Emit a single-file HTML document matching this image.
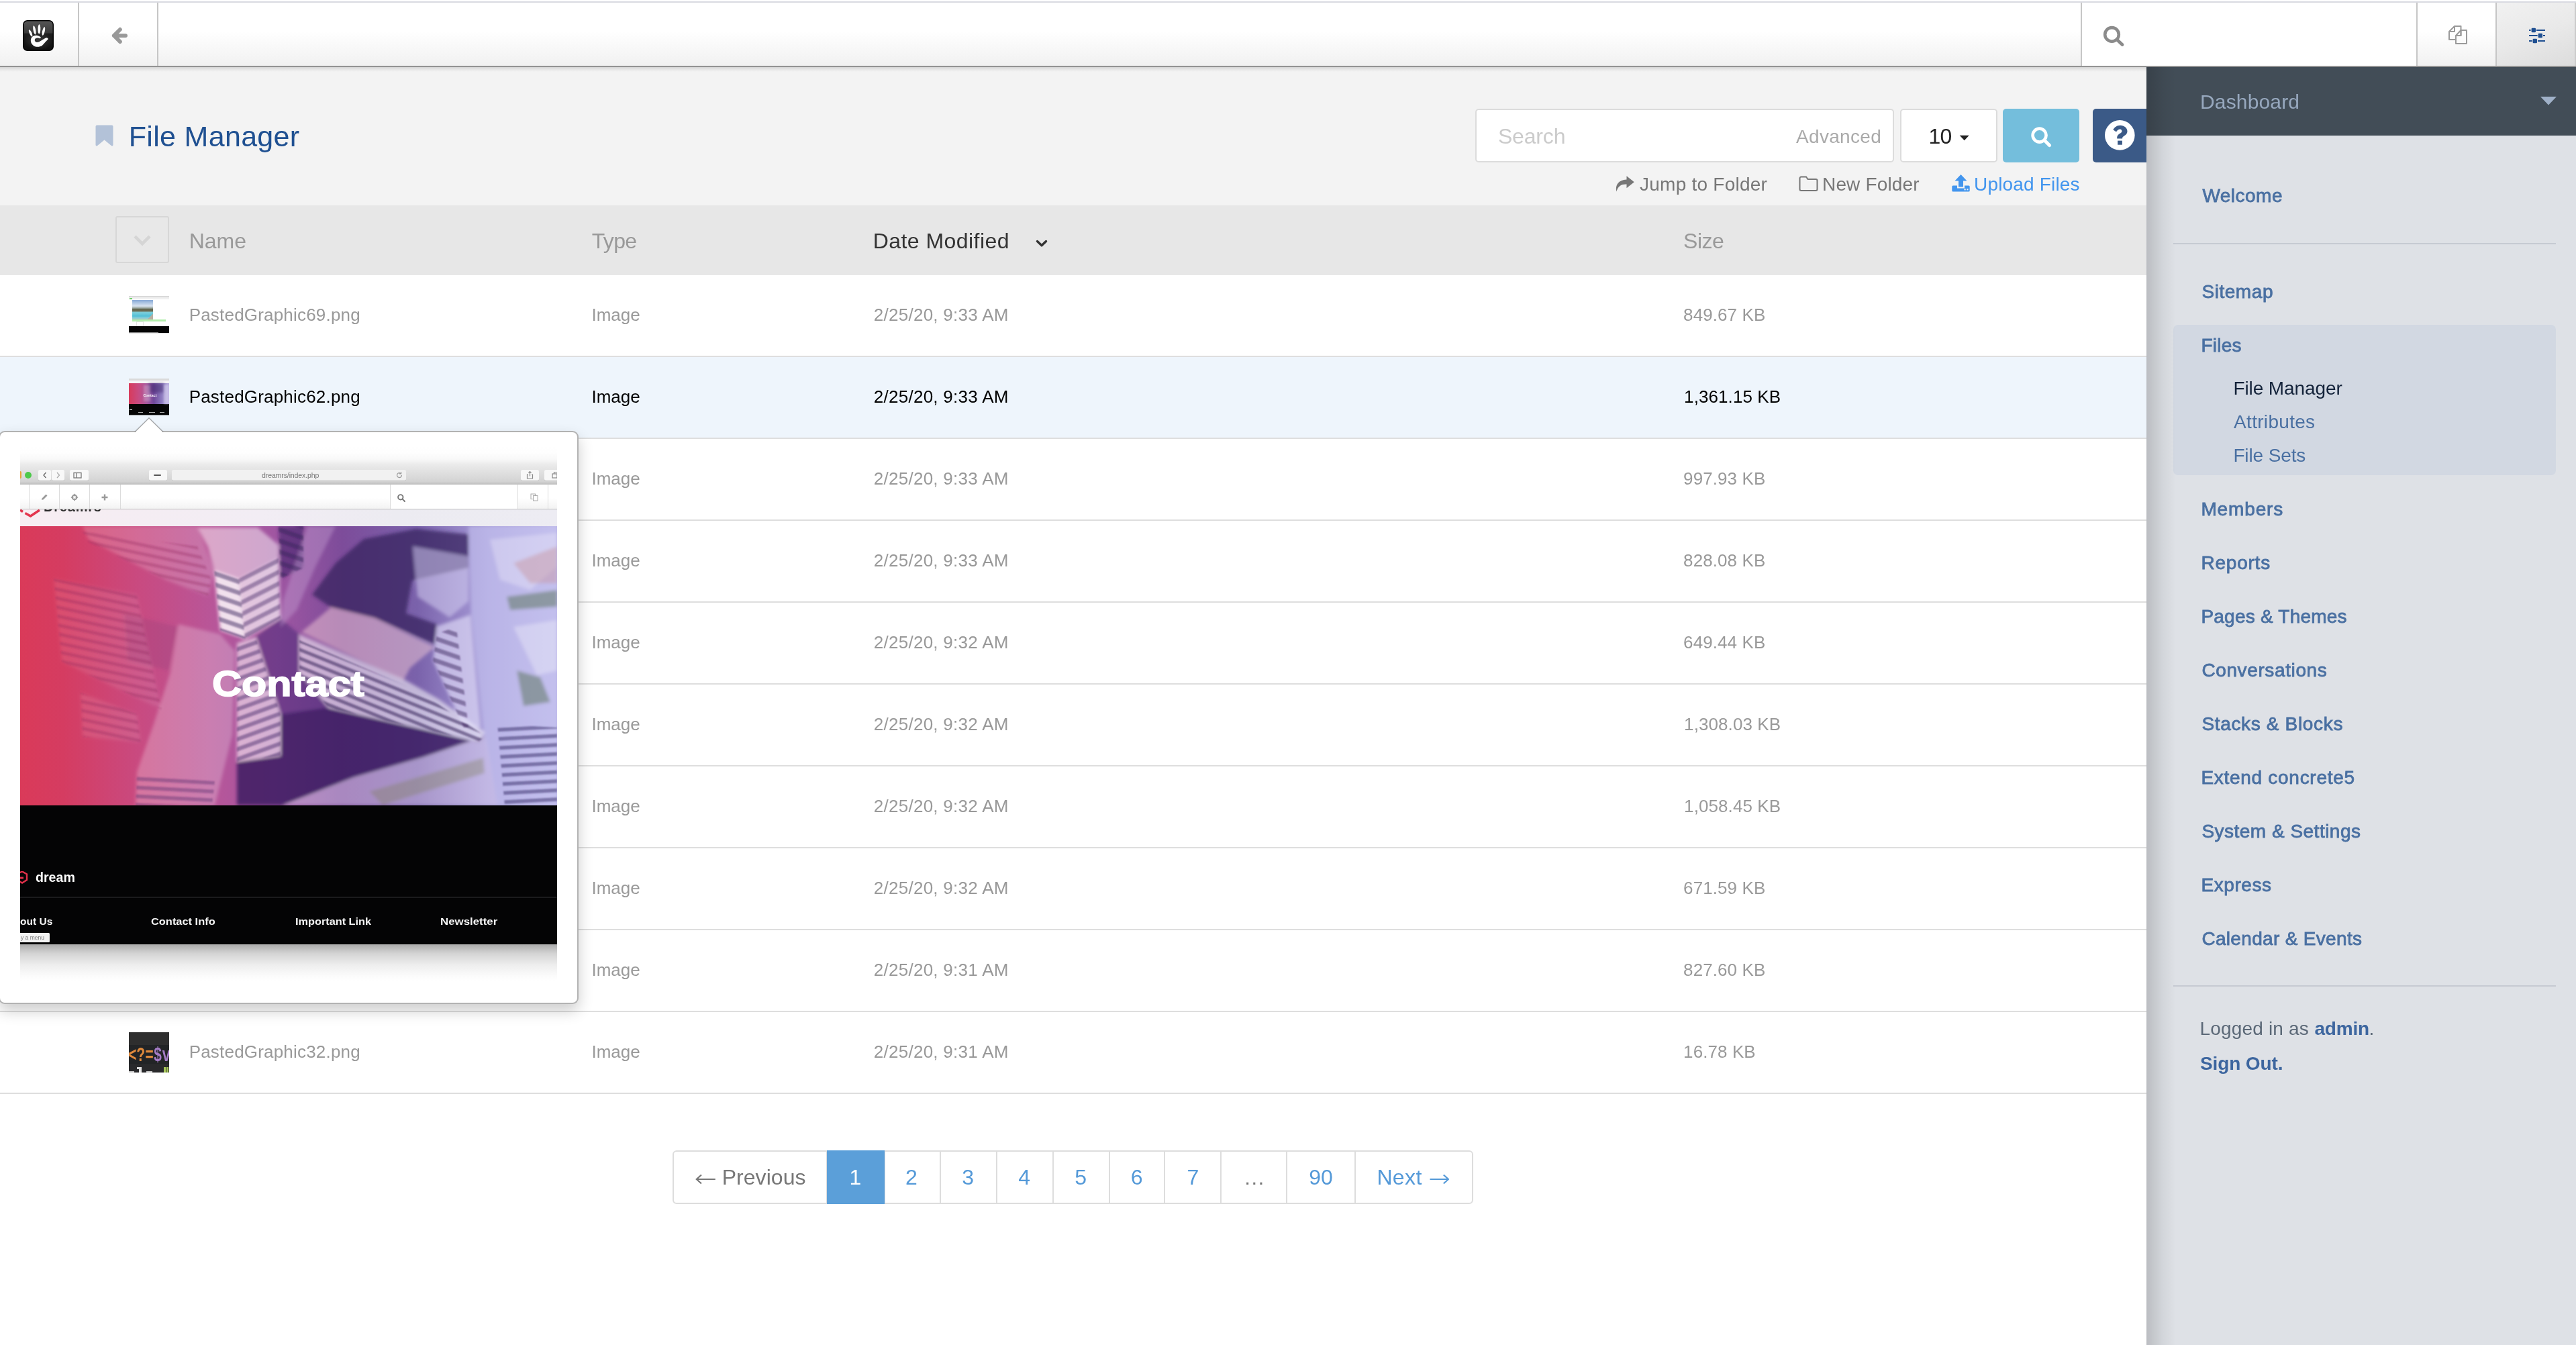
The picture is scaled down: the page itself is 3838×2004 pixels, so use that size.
<!DOCTYPE html>
<html>
<head>
<meta charset="utf-8">
<title>File Manager</title>
<style>
*{box-sizing:border-box;margin:0;padding:0}
html,body{width:3838px;height:2004px;overflow:hidden;background:#fff}
body{position:relative;font-family:"Liberation Sans",sans-serif;color:#999}
#w{position:absolute;left:0;top:0;width:3838px;height:2004px;overflow:hidden;will-change:transform}
.abs{position:absolute}
.t{position:absolute;white-space:nowrap;line-height:1}
/* top chrome */
#topstrip{left:0;top:0;width:3838px;height:4px;background:linear-gradient(#fff 0,#fff 2px,#d9dae1 2px,#d9dae1 4px)}
#toolbar{left:0;top:4px;width:3838px;height:94px;background:linear-gradient(#fff 0,#fff 45%,#f1f1f1 100%)}
#tbborder{left:0;top:98px;width:3838px;height:2px;background:#939393}
#tbshadow{left:0;top:100px;width:3198px;height:7px;background:linear-gradient(rgba(0,0,0,.12),rgba(0,0,0,.05) 50%,rgba(0,0,0,0))}
.vdiv{position:absolute;top:4px;width:2px;height:94px;background:#c6c6c6}
/* page */
#pagebg{left:0;top:100px;width:3198px;height:206px;background:#f3f3f3}
#thead{left:0;top:306px;width:3198px;height:104px;background:#e7e7e7}
.row{position:absolute;left:0;width:3198px;height:122px;border-bottom:2px solid #dedede;background:#fff}
.row.hl{background:#eef5fc}
.c{position:absolute;white-space:nowrap;line-height:1;font-size:26px;color:#999;top:46px}
.hl .c{color:#000}
.thumb{position:absolute;left:192px;top:31px;width:60px;height:56px;overflow:hidden}
/* sidebar */
#side{left:3198px;top:100px;width:640px;height:1904px;background:#dee1e6;overflow:hidden}
#sidehead{left:0;top:0;width:640px;height:102px;background:#424d57}
#sideshadow{left:0;top:0;width:44px;height:1904px;background:linear-gradient(90deg,rgba(0,0,0,.16),rgba(0,0,0,.05) 55%,rgba(0,0,0,0))}
.nav{position:absolute;left:82px;white-space:nowrap;line-height:1;font-size:28px;font-weight:bold;color:#4a70a2}
.sub{position:absolute;left:130px;white-space:nowrap;line-height:1;font-size:28px;color:#4a70a2}
.hr{position:absolute;left:40px;width:570px;height:2px;background:#c6cad2}
/* pagination */
.pg{position:absolute;top:1714px;height:80px;border:2px solid #ddd;background:#fff;font-size:32px;line-height:76px;text-align:center;color:#5499d8;white-space:nowrap}
@media (min-resolution:1.5dppx) and (max-width:2000px){html{zoom:.5}}
</style>
</head>
<body>
<div id="w">
<div id="topstrip" class="abs"></div>
<div id="toolbar" class="abs"></div>
<div id="pagebg" class="abs"></div>
<div id="thead" class="abs"></div>
<div class="row" style="top:410px"><div class="abs" style="left:192px;top:31px;width:60px;height:56px;background:#fff;overflow:hidden"><div class="abs" style="left:0px;top:0px;width:60px;height:2px;background:#d9d9d9"></div><div class="abs" style="left:0px;top:2px;width:60px;height:3px;background:#f0f0f0"></div><div class="abs" style="left:1px;top:2.5px;width:4px;height:2px;background:#6fcf6a"></div><div class="abs" style="left:5px;top:6px;width:31px;height:30px;background:linear-gradient(#86a8d6 0,#b9cde6 18%,#d9e3f0 30%,#9aa7a0 40%,#5d5f45 47%,#6d6a50 54%,#7ccfdc 62%,#52bfd6 80%,#8fd0d8 90%,#b9b2a3 100%)"></div><div class="abs" style="left:27px;top:27px;width:9px;height:9px;background:linear-gradient(135deg,rgba(0,0,0,0) 45%,#b8afa2 46%)"></div><div class="abs" style="left:5px;top:35px;width:50px;height:3px;background:#b4efae"></div><div class="abs" style="left:11px;top:38px;width:11px;height:7px;background:#fff;border:1px solid #e4e4e4"></div><div class="abs" style="left:0px;top:45px;width:60px;height:10px;background:#050505"></div><div class="abs" style="left:0px;top:54px;width:44px;height:1px;background:#8a8a8a"></div><div class="abs" style="left:0px;top:55px;width:60px;height:1px;background:#ddd"></div></div><div class="t" style="left:281.70px;top:46px;font-size:26px;color:#999;letter-spacing:0.192px;">PastedGraphic69.png</div>
<div class="t" style="left:881.40px;top:46px;font-size:26px;color:#999;letter-spacing:0.025px;">Image</div>
<div class="t" style="left:1301.70px;top:46px;font-size:26px;color:#999;letter-spacing:0.276px;">2/25/20, 9:33 AM</div>
<div class="t" style="left:2508.10px;top:46px;font-size:26px;color:#999;letter-spacing:0.089px;">849.67 KB</div>
</div>
<div class="row hl" style="top:532px"><div class="abs" style="left:192px;top:32px;width:60px;height:55px;background:#050505;overflow:hidden"><div class="abs" style="left:0px;top:0px;width:60px;height:3px;background:#dadada"></div><div class="abs" style="left:0px;top:3px;width:60px;height:4px;background:#f6f4f6"></div><div class="abs" style="left:0px;top:7px;width:60px;height:31px;background:linear-gradient(90deg,#d83a5b 0,#c74c83 25%,#a6589f 45%,#70489a 62%,#8b78bd 80%,#b5a9df 100%)"></div><div class="abs" style="left:30px;top:7px;width:22px;height:14px;background:rgba(60,35,105,.45);filter:blur(2px)"></div><div class="abs" style="left:52px;top:9px;width:8px;height:29px;background:rgba(235,230,250,.45);filter:blur(1.500px)"></div><div class="abs" style="left:22px;top:10px;width:10px;height:24px;background:rgba(255,255,255,.22);filter:blur(1.500px)"></div><div class="t" style="left:21.500px;top:22.500px;font-size:5.200px;font-weight:bold;color:#fff;letter-spacing:.1px">Contact</div><div class="abs" style="left:1px;top:46px;width:4px;height:1px;background:#ddd"></div><div class="abs" style="left:14px;top:50px;width:7px;height:1px;background:#aaa"></div><div class="abs" style="left:30px;top:50px;width:9px;height:1px;background:#aaa"></div><div class="abs" style="left:46px;top:50px;width:7px;height:1px;background:#aaa"></div><div class="abs" style="left:0px;top:54px;width:60px;height:1px;background:#999"></div></div><div class="t" style="left:281.70px;top:46px;font-size:26px;color:#000;letter-spacing:0.192px;">PastedGraphic62.png</div>
<div class="t" style="left:881.40px;top:46px;font-size:26px;color:#000;letter-spacing:0.025px;">Image</div>
<div class="t" style="left:1301.70px;top:46px;font-size:26px;color:#000;letter-spacing:0.276px;">2/25/20, 9:33 AM</div>
<div class="t" style="left:2509.10px;top:46px;font-size:26px;color:#000;letter-spacing:0.089px;">1,361.15 KB</div>
</div>
<div class="row" style="top:654px"><div class="t" style="left:281.70px;top:46px;font-size:26px;color:#999;letter-spacing:0.192px;">PastedGraphic61.png</div>
<div class="t" style="left:881.40px;top:46px;font-size:26px;color:#999;letter-spacing:0.025px;">Image</div>
<div class="t" style="left:1301.70px;top:46px;font-size:26px;color:#999;letter-spacing:0.276px;">2/25/20, 9:33 AM</div>
<div class="t" style="left:2508.10px;top:46px;font-size:26px;color:#999;letter-spacing:0.089px;">997.93 KB</div>
</div>
<div class="row" style="top:776px"><div class="t" style="left:281.70px;top:46px;font-size:26px;color:#999;letter-spacing:0.192px;">PastedGraphic60.png</div>
<div class="t" style="left:881.40px;top:46px;font-size:26px;color:#999;letter-spacing:0.025px;">Image</div>
<div class="t" style="left:1301.70px;top:46px;font-size:26px;color:#999;letter-spacing:0.276px;">2/25/20, 9:33 AM</div>
<div class="t" style="left:2508.10px;top:46px;font-size:26px;color:#999;letter-spacing:0.089px;">828.08 KB</div>
</div>
<div class="row" style="top:898px"><div class="t" style="left:281.70px;top:46px;font-size:26px;color:#999;letter-spacing:0.192px;">PastedGraphic59.png</div>
<div class="t" style="left:881.40px;top:46px;font-size:26px;color:#999;letter-spacing:0.025px;">Image</div>
<div class="t" style="left:1301.70px;top:46px;font-size:26px;color:#999;letter-spacing:0.276px;">2/25/20, 9:32 AM</div>
<div class="t" style="left:2508.10px;top:46px;font-size:26px;color:#999;letter-spacing:0.089px;">649.44 KB</div>
</div>
<div class="row" style="top:1020px"><div class="t" style="left:281.70px;top:46px;font-size:26px;color:#999;letter-spacing:0.192px;">PastedGraphic58.png</div>
<div class="t" style="left:881.40px;top:46px;font-size:26px;color:#999;letter-spacing:0.025px;">Image</div>
<div class="t" style="left:1301.70px;top:46px;font-size:26px;color:#999;letter-spacing:0.276px;">2/25/20, 9:32 AM</div>
<div class="t" style="left:2509.10px;top:46px;font-size:26px;color:#999;letter-spacing:0.089px;">1,308.03 KB</div>
</div>
<div class="row" style="top:1142px"><div class="t" style="left:281.70px;top:46px;font-size:26px;color:#999;letter-spacing:0.192px;">PastedGraphic57.png</div>
<div class="t" style="left:881.40px;top:46px;font-size:26px;color:#999;letter-spacing:0.025px;">Image</div>
<div class="t" style="left:1301.70px;top:46px;font-size:26px;color:#999;letter-spacing:0.276px;">2/25/20, 9:32 AM</div>
<div class="t" style="left:2509.10px;top:46px;font-size:26px;color:#999;letter-spacing:0.089px;">1,058.45 KB</div>
</div>
<div class="row" style="top:1264px"><div class="t" style="left:281.70px;top:46px;font-size:26px;color:#999;letter-spacing:0.192px;">PastedGraphic56.png</div>
<div class="t" style="left:881.40px;top:46px;font-size:26px;color:#999;letter-spacing:0.025px;">Image</div>
<div class="t" style="left:1301.70px;top:46px;font-size:26px;color:#999;letter-spacing:0.276px;">2/25/20, 9:32 AM</div>
<div class="t" style="left:2508.10px;top:46px;font-size:26px;color:#999;letter-spacing:0.089px;">671.59 KB</div>
</div>
<div class="row" style="top:1386px"><div class="t" style="left:281.70px;top:46px;font-size:26px;color:#999;letter-spacing:0.192px;">PastedGraphic55.png</div>
<div class="t" style="left:881.40px;top:46px;font-size:26px;color:#999;letter-spacing:0.025px;">Image</div>
<div class="t" style="left:1301.70px;top:46px;font-size:26px;color:#999;letter-spacing:0.276px;">2/25/20, 9:31 AM</div>
<div class="t" style="left:2508.10px;top:46px;font-size:26px;color:#999;letter-spacing:0.089px;">827.60 KB</div>
</div>
<div class="row" style="top:1508px"><div class="abs" style="left:192px;top:30px;width:60px;height:60px;background:#2e2e2e;overflow:hidden"><div class="abs" style="left:0px;top:19px;width:60px;height:28px;background:#222426"></div><div class="abs" style="left:0px;top:47px;width:60px;height:13px;background:#29292b"></div><div class="t" style="left:-1px;top:20px;font-family:'Liberation Mono',monospace;font-weight:bold;font-size:30px;transform-origin:0 0;transform:scaleX(.7);color:#e08a3c">&lt;?=<span style="color:#a57cc6">$v</span></div><div class="abs" style="left:0px;top:58px;width:8px;height:2px;background:#c8c8c8"></div><div class="abs" style="left:11.5px;top:52px;width:4px;height:2.5px;background:#ddd"></div><div class="abs" style="left:14.5px;top:52px;width:4.5px;height:8px;background:#e4e4e4"></div><div class="abs" style="left:25.5px;top:58px;width:9px;height:2px;background:#c8c8c8"></div><div class="abs" style="left:52px;top:52px;width:2.5px;height:8px;background:#a9c95a"></div><div class="abs" style="left:56px;top:52px;width:2.5px;height:8px;background:#a9c95a"></div></div><div class="t" style="left:281.70px;top:46px;font-size:26px;color:#999;letter-spacing:0.192px;">PastedGraphic32.png</div>
<div class="t" style="left:881.40px;top:46px;font-size:26px;color:#999;letter-spacing:0.025px;">Image</div>
<div class="t" style="left:1301.70px;top:46px;font-size:26px;color:#999;letter-spacing:0.276px;">2/25/20, 9:31 AM</div>
<div class="t" style="left:2508.10px;top:46px;font-size:26px;color:#999;letter-spacing:0.089px;">16.78 KB</div>
</div>

<svg class="abs" style="left:142px;top:186px" width="28" height="33" viewBox="0 0 28 33"><path d="M2.500 0.500h22a2 2 0 0 1 2 2v27.500a1.600 1.600 0 0 1-2.700 1.100L13.500 22.500L3.200 31.100A1.600 1.600 0 0 1 .5 30V2.500a2 2 0 0 1 2-2z" fill="#b3c2d8"/></svg>
<div class="t" style="left:191.80px;top:182px;font-size:43px;color:#1f5091;letter-spacing:0.307px;">File Manager</div>
<div class="abs" style="left:2198px;top:162px;width:624px;height:80px;border:2px solid #dcdcdc;border-radius:5px;background:#fff"></div>
<div class="t" style="left:2231.90px;top:187px;font-size:32px;color:#cbcbcb;letter-spacing:-0.159px;">Search</div>
<div class="t" style="left:2676.00px;top:190px;font-size:28px;color:#aaa;letter-spacing:0.319px;">Advanced</div>
<div class="abs" style="left:2831px;top:162px;width:145px;height:80px;border:2px solid #dcdcdc;border-radius:5px;background:#fff"></div>
<div class="t" style="left:2873.40px;top:187px;font-size:32px;color:#222;letter-spacing:-0.797px;">10</div>
<svg class="abs" style="left:2919px;top:201px" width="16" height="9" viewBox="0 0 16 9"><path d="M.7 .8h14L7.700 8.300z" fill="#222"/></svg>
<div class="abs" style="left:2984px;top:162px;width:114px;height:80px;border-radius:5px;background:#74bedc"></div>
<svg class="abs" style="left:3022px;top:185px" width="40" height="40" viewBox="0 0 40 40"><circle cx="16.600" cy="16.600" r="10" fill="none" stroke="#fff" stroke-width="4.600"/><path d="M24 24L31.500 31.500" stroke="#fff" stroke-width="5" stroke-linecap="round"/></svg>
<div class="abs" style="left:3118px;top:162px;width:90px;height:80px;border-radius:5px;background:#3b5a87"></div>
<svg class="abs" style="left:3135.800px;top:179px" width="46" height="46" viewBox="0 0 46 46"><circle cx="22.300" cy="22.400" r="22.300" fill="#fff"/><path d="M12.300 14.300C14.500 10.500 18 7.700 23 7.700C28.500 7.700 33.500 11.500 33.500 16.600C33.500 20.500 31 22.300 28.500 23.800C26.800 24.800 26.100 25.600 26.100 27V27.500H18.200V26.500C18.200 22.800 20.500 21.200 22.800 19.800C24.500 18.800 25.400 18 25.400 16.600C25.400 14.600 24 13.400 22.800 13.400C20.500 13.400 18.600 14.800 17 17.600z" fill="#3b5a87"/><rect x="19.100" y="30.600" width="6.800" height="6.100" fill="#3b5a87"/></svg>
<svg class="abs" style="left:2406px;top:261px" width="30" height="26" viewBox="0 0 30 26"><path d="M17.500 1.200L28.800 10.200L17.500 19.200V13.600C9.500 13.400 4.800 16.200 2.400 24.600C.2 14.500 5.500 7.200 17.500 6.600z" fill="#777"/></svg>
<div class="t" style="left:2443.10px;top:261px;font-size:28px;color:#777;letter-spacing:0.229px;">Jump to Folder</div>
<svg class="abs" style="left:2680px;top:262px" width="30" height="24" viewBox="0 0 30 24"><path d="M3.500 1.500h7.500l2.500 3.500h12a2 2 0 0 1 2 2v13a2 2 0 0 1-2 2h-22a2 2 0 0 1-2-2v-16.500a2 2 0 0 1 2-2z" fill="none" stroke="#777" stroke-width="2"/></svg>
<div class="t" style="left:2715.00px;top:261px;font-size:28px;color:#777;letter-spacing:0.163px;">New Folder</div>
<svg class="abs" style="left:2907px;top:259px" width="30" height="28" viewBox="0 0 30 28"><path d="M14.500 1L23.500 10.500H18V19.500H11V10.500H5.500z" fill="#4295ee"/><path d="M2.800 17.500h6.200v4h11v-4h6.200a1.500 1.500 0 0 1 1.500 1.500v6a1.500 1.500 0 0 1-1.500 1.500h-23.400a1.500 1.500 0 0 1-1.500-1.500v-6a1.500 1.500 0 0 1 1.500-1.500z" fill="#4295ee"/><rect x="19.500" y="22.200" width="2.200" height="2.200" fill="#f3f3f3"/><rect x="23.300" y="22.200" width="2.200" height="2.200" fill="#f3f3f3"/></svg>
<div class="t" style="left:2941.10px;top:261px;font-size:28px;color:#4295ee;letter-spacing:0.161px;">Upload Files</div>
<div class="abs" style="left:172px;top:322px;width:80px;height:70px;border:2px solid #d7d7d7;border-radius:3px;background:#e8e8e8"></div>
<svg class="abs" style="left:198px;top:348px" width="28" height="22" viewBox="0 0 28 22"><path d="M3 4.200L14 15.200L25 4.200" fill="none" stroke="#d5d5d5" stroke-width="4.600" stroke-linecap="butt" stroke-linejoin="miter"/></svg>
<div class="t" style="left:281.70px;top:343px;font-size:32px;color:#999;letter-spacing:0.013px;">Name</div>
<div class="t" style="left:881.70px;top:343px;font-size:32px;color:#999;letter-spacing:-0.659px;">Type</div>
<div class="t" style="left:1300.70px;top:343px;font-size:32px;color:#333;letter-spacing:0.447px;">Date Modified</div>
<svg class="abs" style="left:1542px;top:356px" width="20" height="14" viewBox="0 0 20 14"><path d="M3.500 3.500L10 9.800L16.500 3.500" fill="none" stroke="#333" stroke-width="3.400" stroke-linecap="round" stroke-linejoin="round"/></svg>
<div class="t" style="left:2508.10px;top:343px;font-size:32px;color:#999;letter-spacing:-0.518px;">Size</div>

<div class="pg" style="left:1002px;width:231px;border-radius:6px 0 0 6px;"></div>
<div class="pg" style="left:1232px;width:86px;background:#5b9fd9;border-color:#5b9fd9;z-index:2;"></div>
<div class="pg" style="left:1317px;width:85px;"></div>
<div class="pg" style="left:1400px;width:86px;"></div>
<div class="pg" style="left:1484px;width:86px;"></div>
<div class="pg" style="left:1568px;width:86px;"></div>
<div class="pg" style="left:1652px;width:84px;"></div>
<div class="pg" style="left:1734px;width:86px;"></div>
<div class="pg" style="left:1818px;width:100px;"></div>
<div class="pg" style="left:1916px;width:104px;"></div>
<div class="pg" style="left:2018px;width:177px;border-radius:0 6px 6px 0;"></div>
<div class="t" style="left:1224.4px;top:1738px;width:100px;text-align:center;font-size:32px;color:#fff;z-index:3">1</div>
<div class="t" style="left:1307.9px;top:1738px;width:100px;text-align:center;font-size:32px;color:#5499d8;z-index:3">2</div>
<div class="t" style="left:1392.2px;top:1738px;width:100px;text-align:center;font-size:32px;color:#5499d8;z-index:3">3</div>
<div class="t" style="left:1476.1px;top:1738px;width:100px;text-align:center;font-size:32px;color:#5499d8;z-index:3">4</div>
<div class="t" style="left:1560.1px;top:1738px;width:100px;text-align:center;font-size:32px;color:#5499d8;z-index:3">5</div>
<div class="t" style="left:1643.6px;top:1738px;width:100px;text-align:center;font-size:32px;color:#5499d8;z-index:3">6</div>
<div class="t" style="left:1727.4px;top:1738px;width:100px;text-align:center;font-size:32px;color:#5499d8;z-index:3">7</div>
<div class="t" style="left:1818.7px;top:1738px;width:100px;text-align:center;font-size:32px;color:#777;z-index:3">…</div>
<div class="t" style="left:1918.0px;top:1738px;width:100px;text-align:center;font-size:32px;color:#5499d8;z-index:3">90</div>
<div class="t" style="left:1075.70px;top:1738px;font-size:32px;color:#777;letter-spacing:0.043px;z-index:3;">Previous</div>
<div class="t" style="left:2051.40px;top:1738px;font-size:32px;color:#5499d8;letter-spacing:0.365px;z-index:3;">Next</div>
<svg class="abs" style="left:1036.3px;top:1749.0px;z-index:3" width="30.3" height="16" viewBox="0 0 30.3 16"><path d="M29.8 8H1.800M9 1.500L1.800 8L9 14.500" fill="none" stroke="#777" stroke-width="2.200" stroke-linejoin="miter"/></svg>
<svg class="abs" style="left:2129.5px;top:1749.0px;z-index:3" width="29.8" height="16" viewBox="0 0 29.8 16"><path d="M.5 8H28.0M20.8 1.500L28.0 8L20.8 14.500" fill="none" stroke="#5499d8" stroke-width="2.200" stroke-linejoin="miter"/></svg>

<svg class="abs" style="left:198px;top:620px;z-index:5" width="48" height="26" viewBox="0 0 48 26"><path d="M3 23.500L24 2.800L45 23.500" fill="#fff" stroke="rgba(0,0,0,.32)" stroke-width="1.600"/><rect x="4" y="23" width="40" height="3" fill="#fff"/></svg>
<div id="pop" class="abs" style="left:-2px;top:642px;width:864px;height:854px;border:2px solid rgba(0,0,0,.3);border-radius:9px;background:#fff;box-shadow:0 10px 22px rgba(0,0,0,.2);z-index:4">
<div class="abs" style="left:30px;top:19px;width:800px;height:800px;overflow:hidden">
<div class="abs" style="left:0px;top:0px;width:800px;height:29px;background:linear-gradient(#fff 0,#fefefe 40%,#f8f8f8 74%,#ebebeb 100%)"></div>
<div class="abs" style="left:0px;top:28.5px;width:800px;height:30.5px;background:linear-gradient(#ebebeb,#d3d3d3 85%,#bdbdbd)"></div>
<div class="abs" style="left:0px;top:39px;width:2px;height:11px;background:#e8a53a;border-radius:0 5px 5px 0"></div>
<div class="abs" style="left:7.3px;top:39.9px;width:10.2px;height:10.2px;background:#4ec94a;border-radius:50%"></div>
<div class="abs" style="left:27.2px;top:37px;width:19px;height:15.6px;background:#f8f8f8;border-radius:2.500px;box-shadow:0 1px 0 rgba(0,0,0,.12)"></div>
<div class="abs" style="left:47px;top:37px;width:18.6px;height:15.6px;background:#f8f8f8;border-radius:2.500px;box-shadow:0 1px 0 rgba(0,0,0,.12)"></div>
<div class="abs" style="left:73.7px;top:37px;width:28.2px;height:15.6px;background:#f8f8f8;border-radius:2.500px;box-shadow:0 1px 0 rgba(0,0,0,.12)"></div>
<div class="abs" style="left:191.5px;top:37px;width:27px;height:15.6px;background:#f8f8f8;border-radius:2.500px;box-shadow:0 1px 0 rgba(0,0,0,.12)"></div>
<div class="abs" style="left:225.7px;top:37px;width:349px;height:15.6px;background:#f1f1f1;border-radius:2.500px;box-shadow:0 1px 0 rgba(0,0,0,.12)"></div>
<div class="abs" style="left:746px;top:37px;width:27px;height:15.6px;background:#f8f8f8;border-radius:2.500px;box-shadow:0 1px 0 rgba(0,0,0,.12)"></div>
<div class="abs" style="left:781px;top:37px;width:27px;height:15.6px;background:#f8f8f8;border-radius:2.500px;box-shadow:0 1px 0 rgba(0,0,0,.12)"></div>
<svg class="abs" style="left:27.2px;top:37px" width="80" height="16" viewBox="0 0 80 16" fill="none" stroke="#666" stroke-width="1.300"><path d="M11.500 4L8 8l3.500 4"/><path d="M28 4l3.500 4L28 12" stroke="#aaa"/><rect x="53" y="4.500" width="11" height="7.500" stroke="#777"/><path d="M57 4.500v7.500" stroke="#777"/></svg>
<div class="abs" style="left:199px;top:43.8px;width:11px;height:2.4px;background:#555;border-radius:1px"></div>
<div class="t" style="left:360px;top:40px;font-size:10.500px;color:#777;letter-spacing:-.1px">dreamrs/index.php</div>
<svg class="abs" style="left:559px;top:39px" width="12" height="12" viewBox="0 0 12 12" fill="none" stroke="#999" stroke-width="1.200"><path d="M9.500 6a3.500 3.500 0 1 1-1.200-2.600M8.600 1.200v2.600H6"/></svg>
<svg class="abs" style="left:747px;top:37px" width="60" height="16" viewBox="0 0 60 16" fill="none" stroke="#888" stroke-width="1.200"><path d="M10 7h-1.500v6h8V7H15M12.500 9.500V2.500M10.500 4.500l2-2l2 2"/><rect x="46" y="6" width="7" height="6"/><path d="M48.500 6V3.500h7v6H53"/></svg>
<div class="abs" style="left:0px;top:59px;width:800px;height:36px;background:linear-gradient(#fff 55%,#f3f3f3)"></div>
<div class="abs" style="left:551px;top:59px;width:190px;height:36px;background:#fff"></div>
<div class="abs" style="left:12.7px;top:59px;width:1px;height:36px;background:#dcdcdc"></div>
<div class="abs" style="left:58px;top:59px;width:1px;height:36px;background:#dcdcdc"></div>
<div class="abs" style="left:102.9px;top:59px;width:1px;height:36px;background:#dcdcdc"></div>
<div class="abs" style="left:148.8px;top:59px;width:1px;height:36px;background:#dcdcdc"></div>
<div class="abs" style="left:550.5px;top:59px;width:1px;height:36px;background:#dcdcdc"></div>
<div class="abs" style="left:741px;top:59px;width:1px;height:36px;background:#dcdcdc"></div>
<div class="abs" style="left:786px;top:59px;width:1px;height:36px;background:#dcdcdc"></div>
<svg class="abs" style="left:30px;top:72px" width="12" height="12" viewBox="0 0 12 12"><path d="M2 10l.8-2.800L8.500 1.500l2 2L4.800 9.200z" fill="#9a9a9a"/></svg>
<svg class="abs" style="left:75px;top:72px" width="12" height="12" viewBox="0 0 12 12"><circle cx="6" cy="6" r="3.300" fill="none" stroke="#9a9a9a" stroke-width="2.200"/><path d="M6 .8v10.400M.8 6h10.400" stroke="#9a9a9a" stroke-width="1.400"/><circle cx="6" cy="6" r="1.700" fill="#fff"/></svg>
<svg class="abs" style="left:120.3px;top:72px" width="12" height="12" viewBox="0 0 12 12"><path d="M6 1.500v9M1.500 6h9" stroke="#9a9a9a" stroke-width="2.400"/></svg>
<svg class="abs" style="left:561px;top:71.5px" width="14" height="14" viewBox="0 0 14 14"><circle cx="5.800" cy="5.800" r="3.700" fill="none" stroke="#777" stroke-width="1.900"/><path d="M8.600 8.600l3.400 3.400" stroke="#777" stroke-width="2" stroke-linecap="round"/></svg>
<svg class="abs" style="left:759px;top:71px" width="14" height="14" viewBox="0 0 14 14" fill="none" stroke="#aaa" stroke-width="1"><rect x="2" y="2" width="6.500" height="7.500"/><rect x="5.500" y="4.500" width="6.500" height="7.500" fill="#fff"/></svg>
<div class="abs" style="left:0px;top:94.5px;width:800px;height:1.5px;background:#bcbcbc"></div>
<div class="abs" style="left:0px;top:96px;width:800px;height:25px;background:linear-gradient(90deg,#f7edf2 0,#f2edf4 45%,#ecebf1 70%,#edecf3 100%)"></div>
<div class="abs" style="left:35px;top:95.6px;width:100px;height:5px;overflow:hidden"><div class="t" style="left:0;top:-13.500px;font-size:20px;font-weight:bold;color:#2a2a2a;letter-spacing:.8px">Dreamrs</div></div>
<svg class="abs" style="left:0px;top:95.6px" width="32" height="12" viewBox="0 0 32 12"><path d="M0 1l4 2.500M7.500 5.500l8 4.500L29 1" fill="none" stroke="#e3354e" stroke-width="3.600"/></svg>
<svg class="abs" style="left:0;top:121px" width="800" height="416" viewBox="0 0 800 416">
<defs>
<linearGradient id="hg" x1="0" y1="0" x2="1" y2="0">
<stop offset="0" stop-color="#da3a59"/><stop offset=".08" stop-color="#d53c61"/><stop offset=".22" stop-color="#c94a80"/><stop offset=".36" stop-color="#b85699"/><stop offset=".48" stop-color="#9f56a2"/><stop offset=".60" stop-color="#7d4c9a"/><stop offset=".74" stop-color="#7a62ab"/><stop offset=".87" stop-color="#a79cd8"/><stop offset="1" stop-color="#bdb7e8"/>
</linearGradient>
<filter id="b3" x="-10%" y="-10%" width="120%" height="120%"><feGaussianBlur stdDeviation="2.800"/></filter>
<filter id="b1" x="-10%" y="-10%" width="120%" height="120%"><feGaussianBlur stdDeviation="1.300"/></filter>
<pattern id="sa" width="20" height="15.500" patternUnits="userSpaceOnUse" patternTransform="rotate(19)"><rect width="20" height="6.500" fill="#3a1d5c" fill-opacity=".48"/></pattern>
<pattern id="sb" width="20" height="15.500" patternUnits="userSpaceOnUse" patternTransform="rotate(-27)"><rect width="20" height="6.500" fill="#3a1d5c" fill-opacity=".40"/></pattern>
<pattern id="sc" width="20" height="12" patternUnits="userSpaceOnUse" patternTransform="rotate(22)"><rect width="20" height="5" fill="#2c1850" fill-opacity=".5"/></pattern>
<pattern id="sd" width="20" height="13" patternUnits="userSpaceOnUse" patternTransform="rotate(12)"><rect width="20" height="5" fill="#8a2858" fill-opacity=".28"/></pattern>
<pattern id="se" width="20" height="13.500" patternUnits="userSpaceOnUse" patternTransform="rotate(-3)"><rect width="20" height="5.500" fill="#3d3470" fill-opacity=".55"/></pattern>
<pattern id="sf" width="20" height="14" patternUnits="userSpaceOnUse" patternTransform="rotate(-20)"><rect width="20" height="6" fill="#3a1d5c" fill-opacity=".42"/></pattern>
<pattern id="sg" width="20" height="13" patternUnits="userSpaceOnUse" patternTransform="rotate(3)"><rect width="20" height="5.500" fill="#5a2a70" fill-opacity=".42"/></pattern>
<clipPath id="hc"><rect width="800" height="416"/></clipPath>
</defs>
<g clip-path="url(#hc)">
<rect width="800" height="416" fill="url(#hg)"/>
<g filter="url(#b3)">
<!-- dark zones -->
<path d="M435 102L470 55L512 19L590 4L668 12L668 62L584 81L575 130L621 146L618 176L528 137L463 121z" fill="#34205f" fill-opacity=".74"/>
<path d="M385 0L422 0L422 62L388 78z" fill="#3d2266" fill-opacity=".55"/>
<path d="M460 270L683 322L693 313L600 345L497 375L391 416L323 416L323 351L388 342L388 280z" fill="#38195f" fill-opacity=".80"/>
<path d="M351 165L388 137L416 161L416 217L460 270L388 282z" fill="#4d2a78" fill-opacity=".55"/>
<path d="M155 130L235 150L222 215L160 200z" fill="#8a3a78" fill-opacity=".25"/>
<!-- road (lighter) -->
<path d="M428 0L470 0L440 60L412 125L388 150L392 110z" fill="#c7a6d8" fill-opacity=".38"/>
<!-- left long building L1 -->
<path d="M93 0L264 0L289 65L280 104L217 80L102 20z" fill="#fff" fill-opacity="0.18"/>
<!-- left stepped L2 -->
<path d="M50 78L174 102L190 180L211 273L140 240L62 202z" fill="#fff" fill-opacity="0.09"/>
<!-- bottom-left L3 -->
<path d="M90 248L174 280L180 322L93 314z" fill="#fff" fill-opacity="0.10"/>
<!-- centre vertical building C1 -->
<path d="M236 146L298 161L320 186L316 311L290 416L172 416L174 366L199 295L224 217z" fill="#fff" fill-opacity="0.24"/>
<path d="M323 174L351 165L388 280L388 342L323 351z" fill="#fff" fill-opacity="0.54"/>
<!-- tower T1 roof & faces -->
<path d="M264 2L354 2L385 28L385 47L326 78L289 65L280 31z" fill="#fff" fill-opacity="0.48"/>
<path d="M289 65L326 78L335 168L298 155z" fill="#fff" fill-opacity="0.82"/>
<path d="M326 78L385 47L388 137L335 168z" fill="#fff" fill-opacity="0.66"/>
<!-- centre-right block R1 -->
<path d="M419 158L463 121L528 137L618 180L581 211L571 230z" fill="#f1c9d6" fill-opacity="0.50"/>
<path d="M416 161L575 230L624 258L693 307L683 321L460 271L416 218z" fill="#fff" fill-opacity="0.54"/>
<!-- right tower R2 -->
<path d="M621 149L671 132L686 300L661 300L615 200z" fill="#e4e0fa" fill-opacity="0.62"/>
<!-- far right R3 -->
<path d="M668 0L800 0L800 416L711 416L690 300L672 132z" fill="#c9c6f2" fill-opacity="0.55"/>
<path d="M700 20L800 10L800 60L760 95L715 80z" fill="#fff" fill-opacity=".28"/>
<path d="M735 150L800 140L800 215L770 222z" fill="#fff" fill-opacity=".30"/>
<path d="M585 30L668 45L668 112L640 136L592 105z" fill="#d9d5f5" fill-opacity="0.50"/>
<!-- bottom-right roof R4 -->
<path d="M391 416L497 374L600 344L693 312L711 416z" fill="#e7dcf6" fill-opacity="0.41"/>
<path d="M520 395L690 345L692 368L540 416z" fill="#7d7f5a" fill-opacity=".35"/>
<!-- small greens on right -->
<path d="M725 105L800 95L800 120L730 125z" fill="#4d6a4a" fill-opacity=".45"/>
<path d="M740 215L775 225L790 262L750 268z" fill="#4d6a4a" fill-opacity=".45"/>
<path d="M735 55L800 30L800 85L760 85z" fill="#c79aa8" fill-opacity=".5"/>
</g>
<g filter="url(#b1)">
<path d="M289 65L326 78L335 168L298 155z" fill="url(#sa)"/>
<path d="M326 78L385 47L388 137L335 168z" fill="url(#sb)"/>
<path d="M323 174L351 165L388 280L388 342L323 351z" fill="url(#sf)"/>
<path d="M416 170L575 238L624 266L693 313L683 321L460 271L416 218z" fill="url(#sc)"/>
<path d="M621 160L650 150L668 300L661 300L615 200z" fill="url(#sa)"/>
<path d="M711 295L800 300L800 416L722 416z" fill="url(#se)"/>
<path d="M93 8L264 30L285 80L280 104L217 80L102 24z" fill="url(#sd)"/>
<path d="M50 78L174 102L190 180L211 273L140 240L62 202z" fill="url(#sd)"/>
<path d="M90 248L174 280L180 322L93 314z" fill="url(#sd)"/>
<path d="M174 372L290 380L286 416L172 416z" fill="url(#sg)"/>
<path d="M385 0L422 0L422 62L388 78z" fill="url(#sa)"/>
</g>
</g>
</svg>
<div class="t" style="left:285.5px;top:328.635px;font-size:53px;font-weight:bold;color:#fff;-webkit-text-stroke:1.600px #fff;transform-origin:0 0;transform:scaleX(1.150);letter-spacing:0">Contact</div>
<div class="abs" style="left:0px;top:537px;width:800px;height:207px;background:#040405"></div>
<svg class="abs" style="left:0px;top:635px" width="14" height="20" viewBox="0 0 14 20"><path d="M-2 3l5-2.500 7 4v8.500l-7 4.500-5-3" fill="none" stroke="#e0304a" stroke-width="2.400"/><rect x="0" y="8.500" width="5" height="3" fill="#e0304a"/></svg>
<div class="t" style="left:23.00px;top:635px;font-size:19.5px;color:#fff;font-weight:bold;transform-origin:0 0;transform:scaleX(1.0053);">dream</div>
<div class="abs" style="left:0px;top:673px;width:800px;height:1.5px;background:#1b1b1d"></div>
<div class="t" style="left:0.00px;top:702px;font-size:15px;color:#f4f4f4;font-weight:bold;transform-origin:0 0;transform:scaleX(1.0363);">out Us</div>
<div class="t" style="left:195.00px;top:702px;font-size:15px;color:#f4f4f4;font-weight:bold;transform-origin:0 0;transform:scaleX(1.0936);">Contact Info</div>
<div class="t" style="left:410.21px;top:702px;font-size:15px;color:#f4f4f4;font-weight:bold;transform-origin:0 0;transform:scaleX(1.0855);">Important Link</div>
<div class="t" style="left:626.18px;top:702px;font-size:15px;color:#f4f4f4;font-weight:bold;transform-origin:0 0;transform:scaleX(1.1236);">Newsletter</div>
<div class="abs" style="left:0px;top:727px;width:44px;height:13.5px;background:#f2f2f2;border-radius:0 1.500px 1.500px 0"></div>
<div class="t" style="left:1px;top:729.5px;font-size:8.500px;color:#777">y a menu</div>
<div class="abs" style="left:0px;top:744px;width:800px;height:55px;background:linear-gradient(rgba(0,0,0,.33),rgba(0,0,0,.17) 25%,rgba(0,0,0,.07) 55%,rgba(0,0,0,.015) 85%,rgba(0,0,0,0))"></div>
</div>
</div>

<div id="tbshadow" class="abs"></div>
<div id="side" class="abs">
<div id="sidehead" class="abs"></div>
<div class="t" style="left:80.00px;top:37px;font-size:30px;color:#97a8be;letter-spacing:0.153px;">Dashboard</div>
<svg class="abs" style="left:586px;top:43px" width="26" height="14" viewBox="0 0 26 14"><path d="M1 1h24L13 13.500z" fill="#a0b1c8"/></svg>
<div class="abs" style="left:40px;top:384px;width:570px;height:224px;border-radius:7px;background:#d2d8e2"></div>
<div class="hr" style="top:262px"></div>
<div class="hr" style="top:1368px"></div>
<div class="t" style="left:83.40px;top:178px;font-size:28px;color:#4a70a2;letter-spacing:0.481px;-webkit-text-stroke:0.8px #4a70a2;">Welcome</div>
<div class="t" style="left:82.40px;top:321px;font-size:28px;color:#4a70a2;letter-spacing:0.559px;-webkit-text-stroke:0.8px #4a70a2;">Sitemap</div>
<div class="t" style="left:81.40px;top:401px;font-size:28px;color:#4a70a2;letter-spacing:0.271px;-webkit-text-stroke:0.8px #4a70a2;">Files</div>
<div class="t" style="left:81.40px;top:645px;font-size:28px;color:#4a70a2;letter-spacing:0.868px;-webkit-text-stroke:0.8px #4a70a2;">Members</div>
<div class="t" style="left:81.40px;top:725px;font-size:28px;color:#4a70a2;letter-spacing:0.793px;-webkit-text-stroke:0.8px #4a70a2;">Reports</div>
<div class="t" style="left:81.40px;top:805px;font-size:28px;color:#4a70a2;letter-spacing:0.225px;-webkit-text-stroke:0.8px #4a70a2;">Pages &amp; Themes</div>
<div class="t" style="left:82.40px;top:885px;font-size:28px;color:#4a70a2;letter-spacing:0.618px;-webkit-text-stroke:0.8px #4a70a2;">Conversations</div>
<div class="t" style="left:82.40px;top:965px;font-size:28px;color:#4a70a2;letter-spacing:0.662px;-webkit-text-stroke:0.8px #4a70a2;">Stacks &amp; Blocks</div>
<div class="t" style="left:81.40px;top:1045px;font-size:28px;color:#4a70a2;letter-spacing:0.717px;-webkit-text-stroke:0.8px #4a70a2;">Extend concrete5</div>
<div class="t" style="left:82.40px;top:1125px;font-size:28px;color:#4a70a2;letter-spacing:0.490px;-webkit-text-stroke:0.8px #4a70a2;">System &amp; Settings</div>
<div class="t" style="left:81.40px;top:1205px;font-size:28px;color:#4a70a2;letter-spacing:0.593px;-webkit-text-stroke:0.8px #4a70a2;">Express</div>
<div class="t" style="left:82.40px;top:1285px;font-size:28px;color:#4a70a2;letter-spacing:0.321px;-webkit-text-stroke:0.8px #4a70a2;">Calendar &amp; Events</div>
<div class="t" style="left:129.40px;top:465px;font-size:28px;color:#14233a;letter-spacing:-0.098px;">File Manager</div>
<div class="t" style="left:130.10px;top:515px;font-size:28px;color:#4a70a2;letter-spacing:0.303px;">Attributes</div>
<div class="t" style="left:129.40px;top:565px;font-size:28px;color:#4a70a2;letter-spacing:-0.128px;">File Sets</div>
<div class="t" style="left:79.60px;top:1419px;font-size:28px;color:#5b6877;letter-spacing:0.168px;">Logged in as</div>
<div class="t" style="left:250.40px;top:1419px;font-size:28px;color:#3d669f;font-weight:bold;letter-spacing:-0.188px;">admin</div>
<div class="t" style="left:331.50px;top:1419px;font-size:28px;color:#5b6877;letter-spacing:0.000px;">.</div>
<div class="t" style="left:80.00px;top:1471px;font-size:28px;color:#3d669f;font-weight:bold;letter-spacing:-0.119px;">Sign Out.</div>
<div id="sideshadow" class="abs"></div>
</div>

<div class="abs" style="left:3102px;top:4px;width:498px;height:94px;background:#fff"></div>
<div class="abs" style="left:3720px;top:4px;width:116px;height:94px;background:linear-gradient(160deg,#f1f1f1 0,#e9e9e9 50%,#dcdcdc 100%)"></div>
<div class="vdiv" style="left:116px"></div>
<div class="vdiv" style="left:234px"></div>
<div class="vdiv" style="left:3100px"></div>
<div class="vdiv" style="left:3600px"></div>
<div class="vdiv" style="left:3718px"></div>
<div class="vdiv" style="left:3836px;background:#cbcbcb"></div>
<!-- logo -->
<svg class="abs" style="left:34px;top:30px" width="46" height="46" viewBox="0 0 46 46">
<defs><radialGradient id="lr"><stop offset="0" stop-color="#fff" stop-opacity=".16"/><stop offset="1" stop-color="#fff" stop-opacity="0"/></radialGradient><linearGradient id="lg" x1="0" y1="0" x2="0" y2="1"><stop offset="0" stop-color="#565656"/><stop offset=".41" stop-color="#3a3a3a"/><stop offset=".44" stop-color="#1d1d1d"/><stop offset="1" stop-color="#101010"/></linearGradient></defs>
<rect x=".75" y=".75" width="44.500" height="44.500" rx="6" fill="url(#lg)" stroke="#000" stroke-width="1.500"/>
<ellipse cx="23" cy="31" rx="21" ry="14" fill="url(#lr)"/>
<g fill="#fff" transform="translate(.4 .8)">
<ellipse cx="11.2" cy="18.5" rx="1.7" ry="5.6" transform="rotate(-24 11.2 18.5)"/>
<ellipse cx="17" cy="14" rx="1.800" ry="6.700" transform="rotate(-11 17 14)"/>
<ellipse cx="24" cy="12.600" rx="1.900" ry="7.200" transform="rotate(1 24 12.600)"/>
<ellipse cx="30.500" cy="15.700" rx="1.800" ry="6.500" transform="rotate(13 30.500 15.700)"/>
<path d="M37.2 27.6c-2.6 2.2-5.4 6-9.2 9.8-2.8 1.6-8.4 2.4-12.2 0-4-2.6-5.4-7.6-3.6-11.4 1.8-3.6 6-4.6 9.8-3.6 2.2.6 4 1.6 4.6 2.6l-1.6 1.6c-1.6-1-4.4-1.6-6.4-.2-1.8 1.2-1.6 3.8 0 5 1.6 1.200 3.800 1 5.600 0 3-1.600 6.800-4.400 9.600-5.600 2-.8 3.800.600 3.400 1.800z"/>
</g>
</svg>
<!-- back arrow -->
<svg class="abs" style="left:160px;top:34px" width="40" height="40" viewBox="0 0 40 40"><path d="M27.100 19.050H9.800M18.900 9.950L9.800 19.050L18.900 28.150" fill="none" stroke="#999" stroke-width="5.800" stroke-linecap="round" stroke-linejoin="round"/></svg>
<!-- toolbar search icon -->
<svg class="abs" style="left:3128px;top:32px" width="44" height="44" viewBox="0 0 44 44"><circle cx="18.500" cy="19.400" r="10.300" fill="none" stroke="#8b8b8b" stroke-width="4.600"/><path d="M26 27L34 34.500" stroke="#8b8b8b" stroke-width="4.800" stroke-linecap="round"/></svg>
<!-- copy icon -->
<svg class="abs" style="left:3644px;top:34px" width="40" height="40" viewBox="0 0 40 40" fill="none" stroke="#9a9a9a" stroke-width="2" stroke-linejoin="round"><path d="M13 5h9.500v8M22.500 19.500V13M15 25H5V13l8-8v8H5"/><path d="M22.500 11h8.500v20H15V19l7.500-8v8H15"/></svg>
<!-- sliders icon -->
<svg class="abs" style="left:3764px;top:38px" width="32" height="30" viewBox="0 0 32 30" fill="#1f4f91"><rect x="4" y="6" width="2.600" height="2"/><rect x="15" y="6" width="13" height="2"/><rect x="7.600" y="3.800" width="6.400" height="6.400" rx="1.300"/><rect x="4" y="14" width="12.600" height="2"/><rect x="25" y="14" width="3" height="2"/><rect x="17.600" y="11.800" width="6.400" height="6.400" rx="1.300"/><rect x="4" y="22" width="4.600" height="2"/><rect x="17" y="22" width="11" height="2"/><rect x="9.600" y="19.800" width="6.400" height="6.400" rx="1.300"/></svg>

<div id="tbborder" class="abs"></div>
</div>
</body>
</html>
